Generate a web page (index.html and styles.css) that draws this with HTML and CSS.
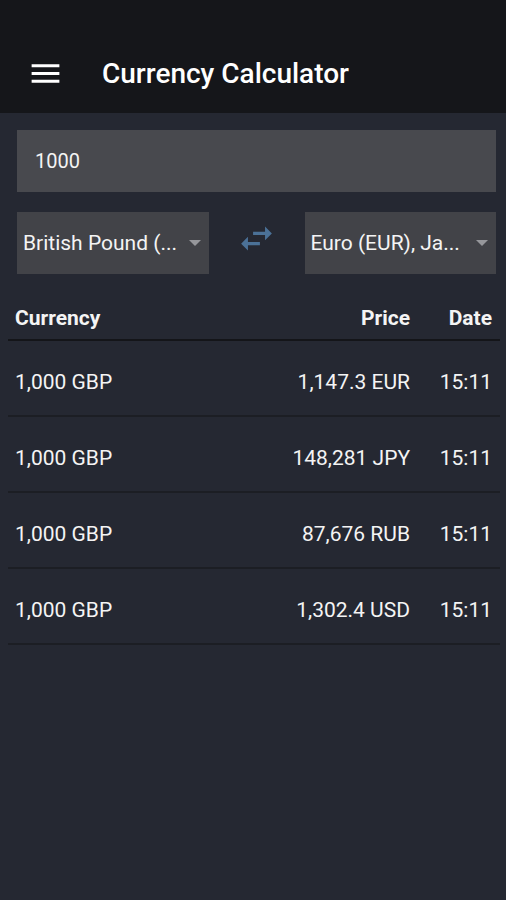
FILE: index.html
```html
<!DOCTYPE html>
<html lang="en">
<head>
    <meta charset="UTF-8">
    <meta name="viewport" content="width=device-width, initial-scale=1.0">
    <title>Currency Calculator</title>
    <link rel="stylesheet" href="styles.css">
</head>
<body>
    <header class="toolbar">
        <svg class="menu-icon" viewBox="0 0 24 24" width="37" height="37"><path d="M3 18h18v-2H3v2zm0-5h18v-2H3v2zm0-7v2h18V6H3z" fill="#ffffff"/></svg>
        <h1>Currency Calculator</h1>
    </header>

    <div class="controls">
        <div class="amount">1000</div>
        <div class="pickers">
            <div class="picker"><span>British Pound (...</span><i class="caret"></i></div>
            <svg class="swap" viewBox="0 0 24 24" width="41" height="41"><path d="M6.99 11L3 15l3.99 4v-3H14v-2H6.99v-3zM21 9l-4-4v3H10v2h7v3l4-4z" fill="#4b7197"/></svg>
            <div class="picker"><span>Euro (EUR), Ja...</span><i class="caret"></i></div>
        </div>
    </div>

    <div class="rates">
        <div class="row head">
            <span>Currency</span><span class="num">Price</span><span class="num">Date</span>
        </div>
        <div class="row">
            <span>1,000 GBP</span><span class="num">1,147.3 EUR</span><span class="num">15:11</span>
        </div>
        <div class="row">
            <span>1,000 GBP</span><span class="num">148,281 JPY</span><span class="num">15:11</span>
        </div>
        <div class="row">
            <span>1,000 GBP</span><span class="num">87,676 RUB</span><span class="num">15:11</span>
        </div>
        <div class="row">
            <span>1,000 GBP</span><span class="num">1,302.4 USD</span><span class="num">15:11</span>
        </div>
    </div>
</body>
</html>
```

FILE: styles.css
```css
body { margin: 0; background: #252832; color: #f4f4f4; font-family: Roboto, "Liberation Sans", sans-serif; min-height: 900px; }
.toolbar { height: 113px; box-sizing: border-box; padding: 34px 0 0 27px; background: #15161a; display: flex; align-items: center; }
.menu-icon { display: block; }
.toolbar h1 { margin: 0 0 0 38px; font-size: 28px; font-weight: 500; color: #ffffff; }
.controls { padding: 17px 10px 0 17px; }
.amount { height: 62px; box-sizing: border-box; padding-left: 18px; background: #48494e; display: flex; align-items: center; font-size: 20px; }
.pickers { margin-top: 20px; display: grid; grid-template-columns: 1fr 96px 1fr; align-items: center; }
.picker { height: 62px; box-sizing: border-box; padding: 0 8px 0 6px; background: #424348; display: flex; align-items: center; justify-content: space-between; font-size: 21px; white-space: nowrap; overflow: hidden; }
.caret { width: 0; height: 0; border-left: 6px solid transparent; border-right: 6px solid transparent; border-top: 6px solid #96979b; margin-left: 6px; }
.swap { display: block; margin: -10px auto 0; }
.rates { margin: 20px 6px 0 8px; }
.row { display: grid; grid-template-columns: 1fr auto 82px; padding: 29px 8px 21px 7px; line-height: 24px; font-size: 21px; border-bottom: 2px solid #1c1e24; }
.row.head { padding: 12px 8px 9px 7px; font-weight: 700; border-bottom-color: #141519; }
.num { text-align: right; }
```
